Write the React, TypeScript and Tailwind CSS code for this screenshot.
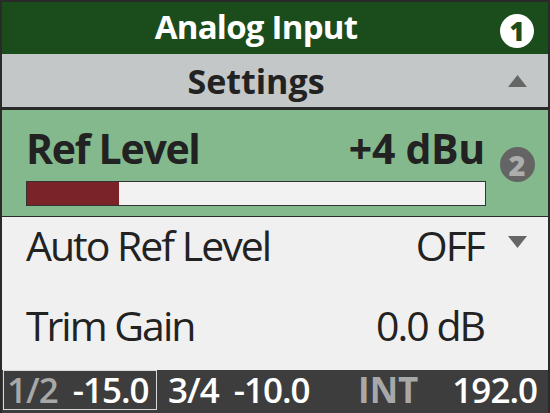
const font = "font-['Open_Sans',sans-serif]";

function TriangleUp() {
  return (
    <svg width="19" height="12" viewBox="0 0 19 12">
      <polygon points="9.5,0 19,12 0,12" fill="#666666" />
    </svg>
  );
}

function TriangleDown() {
  return (
    <svg width="19" height="12" viewBox="0 0 19 12">
      <polygon points="0,0 19,0 9.5,12" fill="#666666" />
    </svg>
  );
}

export default function App() {
  return (
    <div
      className={`${font} flex h-[413px] w-[550px] flex-col border-x-2 border-t-2 border-[#2a2a2a] bg-[#f0f0f0] text-[#222222]`}
    >
      {/* title */}
      <div className="flex h-[52px] shrink-0 items-center bg-[#1b4c1b] pb-[4px] pl-[24px] pr-[13px]">
        <div className="flex-1 text-center text-[33px] font-bold leading-none tracking-[-0.75px] text-white">
          Analog Input
        </div>
        <div className="ml-[13px] mt-[9px] flex w-[36px] justify-center">
          <div className="flex h-[34px] w-[34px] items-center justify-center rounded-full bg-white text-[26px] font-extrabold leading-none text-[#1b4c1b]">
            1
          </div>
        </div>
      </div>

      {/* section */}
      <div className="flex h-[56px] shrink-0 items-center border-b-[3px] border-[#2a2a2a] bg-[#c3c7c7] pl-[24px] pr-[13px]">
        <div className="flex-1 text-center text-[34px] font-bold leading-none">
          Settings
        </div>
        <div className="ml-[13px] flex w-[36px] justify-center">
          <TriangleUp />
        </div>
      </div>

      {/* selected item */}
      <div className="flex h-[107px] shrink-0 border-b border-[#2a2a2a] bg-[#84b98d] pl-[24px] pr-[13px] pt-[13px]">
        <div className="flex flex-1 flex-col">
          <div className="flex justify-between text-[41px] font-bold leading-[50px]">
            <span className="tracking-[-1.3px]">Ref Level</span>
            <span className="mr-[1px] tracking-[-0.3px]">+4 dBu</span>
          </div>
          <div className="mt-[8px] h-[25px] border-[1.5px] border-[#333333] bg-[#f2f2f2]">
            <div className="h-full w-[20%] bg-[#7a2329]" />
          </div>
        </div>
        <div className="ml-[13px] flex w-[36px] justify-center pt-[24px]">
          <div className="flex h-[35px] w-[35px] items-center justify-center rounded-full bg-[#646464] text-[29px] font-extrabold leading-none text-[#adadad]">
            2
          </div>
        </div>
      </div>

      {/* items */}
      <div className="flex h-[80px] shrink-0 pl-[24px] pr-[13px] pt-[3px]">
        <div className="flex flex-1 justify-between text-[41px] leading-[50px] tracking-[-2px]">
          <span>Auto Ref Level</span>
          <span className="mr-[2px]">OFF</span>
        </div>
        <div className="ml-[13px] flex h-[50px] w-[36px] items-center justify-center pb-[6px]">
          <TriangleDown />
        </div>
      </div>

      <div className="flex min-h-0 flex-1 pl-[24px] pr-[13px] pt-[3px]">
        <div className="flex flex-1 justify-between text-[41px] leading-[50px] tracking-[-2px]">
          <span>Trim Gain</span>
          <span className="mr-[2px]">0.0 dB</span>
        </div>
        <div className="ml-[13px] w-[36px]" />
      </div>

      {/* status bar */}
      <div className="flex h-[43px] shrink-0 items-start bg-[#3d3d3d] pr-[11px] text-[35px] font-semibold leading-[38px] tracking-[-1px] text-white">
        <div className="ml-[1px] flex h-[40px] w-[154px] items-center gap-[15px] border border-[#d9d9d9] pl-[3px]">
          <span className="text-[#a8a8a8]">1/2</span>
          <span>-15.0</span>
        </div>
        <div className="ml-[11px] flex h-[40px] items-center gap-[15px]">
          <span>3/4</span>
          <span>-10.0</span>
        </div>
        <div className="ml-auto flex h-[40px] items-center gap-[34px]">
          <span className="font-bold tracking-normal text-[#a8a8a8]">INT</span>
          <span>192.0</span>
        </div>
      </div>
    </div>
  );
}
